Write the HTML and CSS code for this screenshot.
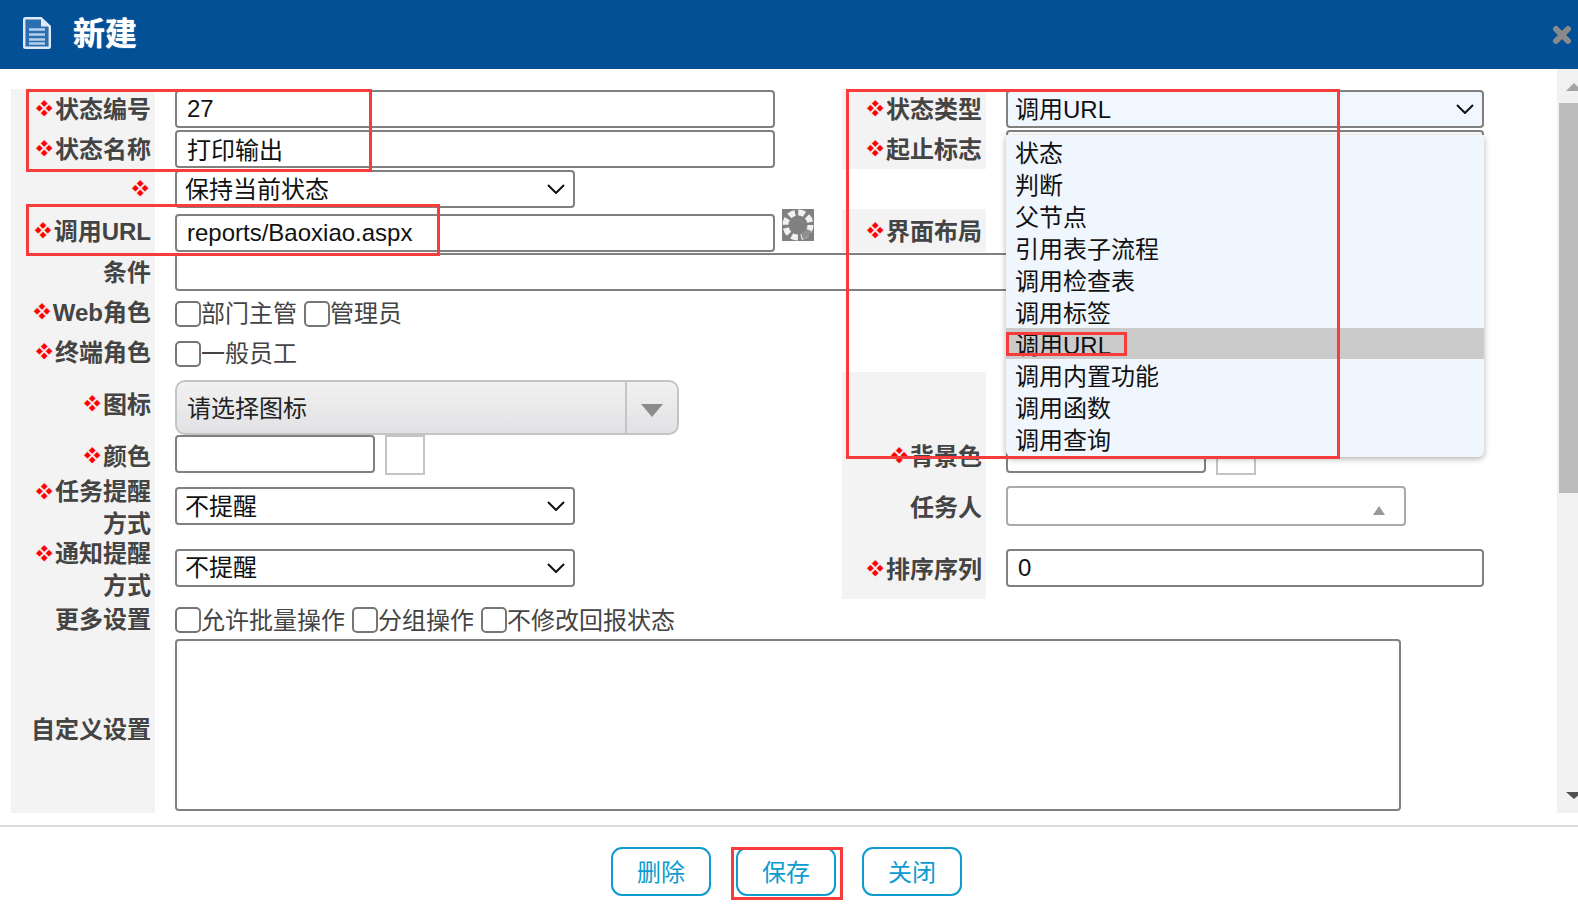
FILE: index.html
```html
<!DOCTYPE html>
<html lang="zh-CN">
<head>
<meta charset="utf-8">
<title>新建</title>
<link rel="stylesheet" href="styles.css">
</head>
<body>
<div class="page">
  <header class="titlebar">
    <svg class="doc-icon" viewBox="0 0 28 32" aria-hidden="true">
      <path d="M2.500 1.200h15.500l8.800 8.300v20a1.300 1.300 0 0 1-1.300 1.300H2.500a1.300 1.300 0 0 1-1.300-1.300V2.500a1.300 1.300 0 0 1 1.300-1.300z" fill="#2c6fb0" stroke="#dfeaf6" stroke-width="2.400"/>
      <path d="M18 2v7.500h8z" fill="#dfeaf6"/>
      <path d="M6 12.500h16M6 17.500h16M6 22.500h16M6 26.500h16" stroke="#b6d0ea" stroke-width="2.400"/>
    </svg>
    <h1 class="title">新建</h1>
    <svg class="close-icon" viewBox="0 0 20 20" aria-hidden="true">
      <path d="M4 4l12 12M16 4L4 16" stroke="#8a8a8a" stroke-width="6" stroke-linecap="round"/>
    </svg>
  </header>

  <div class="content">
    <main class="form">
      <div class="lab"><span class="req">❖</span>状态编号</div>
      <div class="field"><input class="text wide" type="text" value="27"></div>
      <div class="lab lab-r"><span class="req">❖</span>状态类型</div>
      <div class="field field-r"><select class="sel full tinted"><option>调用URL</option></select></div>

      <div class="lab"><span class="req">❖</span>状态名称</div>
      <div class="field"><input class="text wide raise" type="text" value="打印输出"></div>
      <div class="lab lab-r"><span class="req">❖</span>起止标志</div>
      <div class="field field-r"><select class="sel full"><option></option></select></div>

      <div class="lab"><span class="req">❖</span></div>
      <div class="field"><select class="sel mid"><option>保持当前状态</option></select></div>
      <div class="blank"></div>
      <div class="field field-r"></div>

      <div class="lab"><span class="req">❖</span>调用URL</div>
      <div class="field field-end">
        <input class="text wide" type="text" value="reports/Baoxiao.aspx">
        <svg class="gear" viewBox="0 0 32 32" aria-hidden="true">
          <rect width="32" height="32" fill="#808080"/>
          <circle cx="16" cy="16" r="12.500" fill="none" stroke="#f1f1f1" stroke-width="6" stroke-dasharray="6.500 3.300"/>
          <path d="M27 21a12.500 12.500 0 0 1-7 6.500" fill="none" stroke="#8f8f8f" stroke-width="6"/>
        </svg>
      </div>
      <div class="lab lab-r"><span class="req">❖</span>界面布局</div>
      <div class="field field-r field-end"><select class="sel full"><option></option></select></div>

      <div class="lab">条件</div>
      <div class="field field-span"><input class="text full" type="text"></div>

      <div class="lab"><span class="req">❖</span>Web角色</div>
      <div class="field checks checks-low">
        <label class="chk"><input type="checkbox">部门主管</label>
        <label class="chk"><input type="checkbox">管理员</label>
      </div>
      <div class="blank"></div>
      <div class="field field-r"></div>

      <div class="lab"><span class="req">❖</span>终端角色</div>
      <div class="field checks checks-low">
        <label class="chk"><input type="checkbox">一般员工</label>
      </div>
      <div class="blank"></div>
      <div class="field field-r"></div>

      <div class="lab"><span class="req">❖</span>图标</div>
      <div class="field field-end">
        <div class="combo">
          <span class="combo-text">请选择图标</span>
          <span class="combo-btn"><span class="tri-down"></span></span>
        </div>
      </div>
      <div class="lab lab-r"></div>
      <div class="field field-r"></div>

      <div class="lab"><span class="req">❖</span>颜色</div>
      <div class="field field-start">
        <input class="text color" type="text">
        <span class="swatch"></span>
      </div>
      <div class="lab lab-r"><span class="req">❖</span>背景色</div>
      <div class="field field-r field-start">
        <input class="text color" type="text">
        <span class="swatch"></span>
      </div>

      <div class="lab lab-two"><span><span class="req">❖</span>任务提醒<br>方式</span></div>
      <div class="field field-up"><select class="sel mid"><option>不提醒</option></select></div>
      <div class="lab lab-r">任务人</div>
      <div class="field field-r field-up">
        <div class="picker"><span class="tri-up"></span></div>
      </div>

      <div class="lab lab-two"><span><span class="req">❖</span>通知提醒<br>方式</span></div>
      <div class="field field-up"><select class="sel mid"><option>不提醒</option></select></div>
      <div class="lab lab-r"><span class="req">❖</span>排序序列</div>
      <div class="field field-r field-up"><input class="text full" type="text" value="0"></div>

      <div class="lab">更多设置</div>
      <div class="field field-span checks">
        <label class="chk"><input type="checkbox">允许批量操作</label>
        <label class="chk"><input type="checkbox">分组操作</label>
        <label class="chk"><input type="checkbox">不修改回报状态</label>
      </div>

      <div class="lab lab-low">自定义设置</div>
      <div class="field field-span field-start"><textarea class="area"></textarea></div>

      <ul class="dropdown">
        <li>状态</li>
        <li>判断</li>
        <li>父节点</li>
        <li>引用表子流程</li>
        <li>调用检查表</li>
        <li>调用标签</li>
        <li class="on">调用URL</li>
        <li>调用内置功能</li>
        <li>调用函数</li>
        <li>调用查询</li>
      </ul>
    </main>
    <aside class="scrollbar" aria-hidden="true">
      <span class="sb-up"></span>
      <span class="sb-thumb"></span>
      <span class="sb-down"></span>
    </aside>
  </div>

  <footer class="footer">
    <button class="btn" type="button">删除</button>
    <button class="btn" type="button">保存</button>
    <button class="btn btn-last" type="button">关闭</button>
  </footer>

  <div class="mark mark-a"></div>
  <div class="mark mark-b"></div>
  <div class="mark mark-c"></div>
  <div class="mark mark-d"></div>
  <div class="mark mark-e"></div>
</div>
</body>
</html>
```

FILE: styles.css
```css
* { box-sizing: border-box; }
html, body { margin: 0; padding: 0; background: #fff; overflow: hidden; }
body, input, select, textarea, button {
  font-family: "Liberation Sans", "Noto Sans CJK SC", sans-serif;
  font-size: 24px;
}
.page { position: relative; width: 1578px; height: 908px; overflow: hidden; }

.titlebar {
  height: 69px;
  background: #045096;
  display: flex;
  align-items: center;
  padding: 0 6px 3px 23px;
}
.doc-icon { width: 28px; height: 32px; flex: none; }
.title {
  margin: 2px 0 0 22px;
  font-size: 32px;
  font-weight: 700;
  color: #fff;
  flex: 1;
  line-height: 40px;
  text-shadow: 0 0 1px #fff;
}
.close-icon { width: 20px; height: 20px; flex: none; margin-top: 3px; }

.content { display: flex; height: 744px; }
.form {
  position: relative;
  width: 1557px;
  padding: 20px 0 0 11px;
  display: grid;
  grid-template-columns: 144px 687px 144px 498px;
  grid-template-rows: 40px 40px 40px 43px 40px 40px 40px 63px 41px 62px 61px 40px 174px;
}
.lab {
  background: #f3f3f3;
  color: #444;
  font-weight: 700;
  text-align: right;
  padding: 1px 4px 0 0;
  display: flex;
  align-items: center;
  justify-content: flex-end;
  line-height: 31px;
  white-space: nowrap;
}
.lab-low { padding-top: 6px; }
.req {
  font-family: "DejaVu Sans", sans-serif;
  color: #f00;
  font-weight: 400;
  -webkit-text-stroke: .7px #f3f3f3;
}
.blank { background: #fff; }
.field {
  padding-left: 20px;
  display: flex;
  align-items: center;
  min-width: 0;
}
.field-end { align-items: flex-end; }
.field-start { align-items: flex-start; }
.field-up { padding-bottom: 2px; }
.field-span { grid-column: 2 / 5; }

.text {
  height: 38px;
  border: 2px solid #808080;
  border-radius: 4px;
  padding: 0 10px;
  color: #111;
  background: #fff;
  outline: none;
}
.raise { line-height: 30px; padding-bottom: 2px; }
.wide { width: 600px; flex: none; }
.full { width: 100%; }
.color { width: 200px; flex: none; }
.swatch {
  width: 40px;
  height: 40px;
  margin: 0 0 0 10px;
  border: 2px solid #c4c4c4;
  flex: none;
}
.sel {
  appearance: none;
  height: 38px;
  border: 2px solid #808080;
  border-radius: 4px;
  padding: 0 32px 0 8px;
  background-color: #fff;
  background-image: url("data:image/svg+xml,%3Csvg xmlns='http://www.w3.org/2000/svg' width='18' height='10'%3E%3Cpath d='M1 1l8 8 8-8' fill='none' stroke='%23111' stroke-width='2'/%3E%3C/svg%3E");
  background-repeat: no-repeat;
  background-position: right 8px center;
  color: #111;
  outline: none;
}
.mid { width: 400px; }
.tinted { background-color: #f0f7fe; padding-left: 7px; }
.gear { width: 32px; height: 32px; margin: 0 0 11px 7px; flex: none; }

.checks { gap: 7px; padding-bottom: 2px; }
.chk { display: flex; align-items: center; color: #444; white-space: nowrap; }
.chk input {
  appearance: none;
  width: 26px;
  height: 26px;
  margin: 0;
  border: 2px solid #767676;
  border-radius: 5px;
  background: #fff;
  flex: none;
  translate: 0 2px;
}
.checks-low .chk input { translate: 0 3px; }

.combo {
  width: 504px;
  height: 55px;
  border: 2px solid #c4c4c4;
  border-radius: 10px;
  background: linear-gradient(#f1f1f1, #e2e2e5);
  display: flex;
}
.combo-text { flex: 1; padding: 3px 0 0 10px; line-height: 48px; color: #222; }
.combo-btn {
  width: 52px;
  border-left: 2px solid #c4c4c4;
  display: flex;
  align-items: center;
  justify-content: center;
  padding-top: 5px;
}
.tri-down {
  width: 0;
  height: 0;
  border-left: 11px solid transparent;
  border-right: 11px solid transparent;
  border-top: 13px solid #8c8c8c;
}
.picker {
  width: 400px;
  height: 40px;
  border: 2px solid #aaa;
  border-radius: 4px;
  display: flex;
  justify-content: flex-end;
  align-items: flex-end;
  padding: 0 19px 9px 0;
}
.tri-up {
  width: 0;
  height: 0;
  border-left: 6px solid transparent;
  border-right: 6px solid transparent;
  border-bottom: 9px solid #999;
}
.area {
  display: block;
  width: 1226px;
  height: 172px;
  border: 2px solid #808080;
  border-radius: 4px;
  resize: none;
  outline: none;
  background: #fff;
}

.dropdown {
  position: absolute;
  left: 1006px;
  top: 66px;
  width: 478px;
  height: 322px;
  margin: 0;
  padding: 1.200px 0 0;
  list-style: none;
  background: #eff6fd;
  border-radius: 0 0 6px 6px;
  box-shadow: 0 2px 6px rgba(0, 0, 0, .3);
  color: #111;
}
.dropdown li { height: 31.900px; line-height: 36px; padding-left: 9px; }
.dropdown .on { background: #cbcbcb; }

.scrollbar {
  width: 21px;
  background: #f1f1f1;
  overflow: hidden;
  display: flex;
  flex-direction: column;
}
.sb-up {
  width: 0;
  height: 0;
  margin: 14px 0 0 9px;
  border-left: 8px solid transparent;
  border-right: 8px solid transparent;
  border-bottom: 8px solid #a3a3a3;
  flex: none;
}
.sb-thumb {
  height: 390px;
  margin: 12px 0 0 2px;
  background: #bcbcbc;
  flex: none;
}
.sb-down {
  width: 0;
  height: 0;
  margin: auto 0 14px 9px;
  border-left: 8px solid transparent;
  border-right: 8px solid transparent;
  border-top: 7px solid #505050;
  flex: none;
}

.footer {
  margin-top: 12px;
  border-top: 2px solid #ddd;
  padding: 20px 5px 0 0;
  display: flex;
  justify-content: center;
  gap: 25px;
}
.btn {
  width: 100px;
  height: 49px;
  border: 2px solid #0d9bd0;
  border-radius: 11px;
  background: #fff;
  color: #0d9bd0;
  padding: 0 0 3px;
}
.btn-last { margin-left: 1px; }

.mark {
  position: absolute;
  border: 3px solid #f83c3c;
  pointer-events: none;
}
.mark-a { left: 26px; top: 89px; width: 346px; height: 83px; }
.mark-b { left: 26px; top: 204px; width: 414px; height: 52px; }
.mark-c { left: 846px; top: 89px; width: 494px; height: 370px; }
.mark-d { left: 1006px; top: 332px; width: 121px; height: 24px; }
.mark-e { left: 731px; top: 847px; width: 112px; height: 53px; }
```
